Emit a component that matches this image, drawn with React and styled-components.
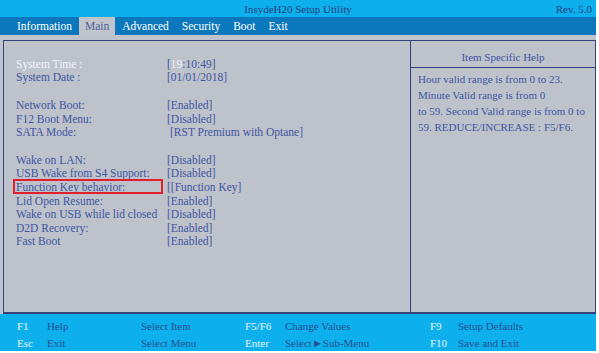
import styled, { createGlobalStyle } from "styled-components";

const GlobalStyle = createGlobalStyle`
  html, body {
    margin: 0;
    padding: 0;
    background: #ffffff;
  }
  body {
    font-family: "Liberation Serif", "Times New Roman", serif;
  }
`;

const Screen = styled.div`
  width: 596px;
  height: 351px;
  display: flex;
  flex-direction: column;
  background: #bfc3cc;
`;

const TitleBar = styled.div`
  height: 17px;
  background: #0db0ec;
  display: grid;
  grid-template-columns: 1fr auto 1fr;
  align-items: center;
  font-size: 11px;
  color: #1f3e7e;
  padding: 0 4px 0 0;
`;

const Title = styled.span`
  grid-column: 2;
  padding-left: 4px;
`;

const Rev = styled.span`
  grid-column: 3;
  justify-self: end;
`;

const MenuBar = styled.div`
  height: 18px;
  background: #0b78bd;
  display: flex;
  align-items: stretch;
  padding-left: 11px;
`;

const Tab = styled.div`
  display: flex;
  align-items: center;
  padding: 0 6px;
  margin-right: 1px;
  font-size: 11.5px;
  color: ${(p) => (p.active ? "#50609a" : "#ffffff")};
  background: ${(p) => (p.active ? "#c0c4cc" : "transparent")};
`;

const Body = styled.div`
  flex: 1;
  padding: 5px 0 0 3px;
  display: flex;
`;

const Panel = styled.div`
  flex: 1;
  border: 1px solid #34427a;
  border-bottom-width: 2px;
  display: flex;
  background: #bec2cb;
`;

const Settings = styled.div`
  width: 406px;
  box-sizing: border-box;
  padding: 16px 0 0 12px;
  display: flex;
  flex-direction: column;
  gap: 14px;
`;

const Group = styled.div`
  display: flex;
  flex-direction: column;
`;

const Row = styled.div`
  position: relative;
  display: flex;
  height: 13.6px;
  align-items: center;
  font-size: 11.5px;
  color: #3f55a3;
`;

const Label = styled.span`
  width: 151px;
  color: ${(p) => (p.selected ? "#f2f4fa" : "#3f55a3")};
  white-space: nowrap;
`;

const Value = styled.span`
  white-space: nowrap;
  padding-left: ${(p) => (p.indent ? "3px" : "0")};
`;

const Cursor = styled.span`
  color: #f2f4fa;
`;

const Highlight = styled.div`
  position: absolute;
  left: -3px;
  top: -1px;
  width: 146px;
  height: 11px;
  border: 2px solid #e0202c;
`;

const Help = styled.div`
  flex: 1;
  border-left: 1px solid #34427a;
  display: flex;
  flex-direction: column;
`;

const HelpHeader = styled.div`
  height: 27px;
  border-bottom: 1px solid #34427a;
  display: flex;
  align-items: center;
  justify-content: center;
  padding-top: 5px;
  box-sizing: border-box;
  font-size: 11px;
  color: #3f55a3;
`;

const HelpText = styled.div`
  padding: 3px 2px 0 7px;
  font-size: 11px;
  line-height: 16px;
  color: #3f55a3;
  white-space: nowrap;
`;

const Footer = styled.div`
  height: 37px;
  box-sizing: border-box;
  background: #0db0ec;
  display: grid;
  grid-template-columns: 30px 94px 104px 40px 145px 28px 1fr;
  grid-auto-rows: 17px;
  align-content: start;
  padding: 4px 0 0 17px;
  font-size: 11px;
`;

const Key = styled.span`
  color: #e6f4ff;
  line-height: 17px;
`;

const Desc = styled.span`
  color: #264f94;
  white-space: nowrap;
  line-height: 17px;
`;

const tabs = ["Information", "Main", "Advanced", "Security", "Boot", "Exit"];

const groups = [
  [
    ["System Time :", "time"],
    ["System Date :", "[01/01/2018]"],
  ],
  [
    ["Network Boot:", "[Enabled]"],
    ["F12 Boot Menu:", "[Disabled]"],
    ["SATA Mode:", "[RST Premium with Optane]", true],
  ],
  [
    ["Wake on LAN:", "[Disabled]"],
    ["USB Wake from S4 Support:", "[Disabled]"],
    ["Function Key behavior:", "[[Function Key]", false, true],
    ["Lid Open Resume:", "[Enabled]"],
    ["Wake on USB while lid closed", "[Disabled]"],
    ["D2D Recovery:", "[Enabled]"],
    ["Fast Boot", "[Enabled]"],
  ],
];

const footer = [
  ["F1", "Help", "Select Item", "F5/F6", "Change Values", "F9", "Setup Defaults"],
  ["Esc", "Exit", "Select Menu", "Enter", "Select\u25BASub-Menu", "F10", "Save and Exit"],
];

export default function App() {
  return (
    <>
      <GlobalStyle />
      <Screen>
        <TitleBar>
          <Title>InsydeH20 Setup Utility</Title>
          <Rev>Rev. 5.0</Rev>
        </TitleBar>
        <MenuBar>
          {tabs.map((t) => (
            <Tab key={t} active={t === "Main"}>
              {t}
            </Tab>
          ))}
        </MenuBar>
        <Body>
          <Panel>
            <Settings>
              {groups.map((g, i) => (
                <Group key={i}>
                  {g.map(([label, value, indent, boxed], j) => (
                    <Row key={label}>
                      {boxed && <Highlight />}
                      <Label selected={i === 0 && j === 0}>{label}</Label>
                      <Value indent={indent}>
                        {value === "time" ? (
                          <>
                            [<Cursor>19</Cursor>:10:49]
                          </>
                        ) : (
                          value
                        )}
                      </Value>
                    </Row>
                  ))}
                </Group>
              ))}
            </Settings>
            <Help>
              <HelpHeader>Item Specific Help</HelpHeader>
              <HelpText>
                Hour valid range is from 0 to 23.
                <br />
                Minute Valid range is from 0
                <br />
                to 59. Second Valid range is from 0 to
                <br />
                59. REDUCE/INCREASE : F5/F6.
              </HelpText>
            </Help>
          </Panel>
        </Body>
        <Footer>
          {footer.map((row) =>
            row.map((cell, k) =>
              k === 0 || k === 3 || k === 5 ? (
                <Key key={cell}>{cell}</Key>
              ) : (
                <Desc key={cell}>{cell}</Desc>
              )
            )
          )}
        </Footer>
      </Screen>
    </>
  );
}
